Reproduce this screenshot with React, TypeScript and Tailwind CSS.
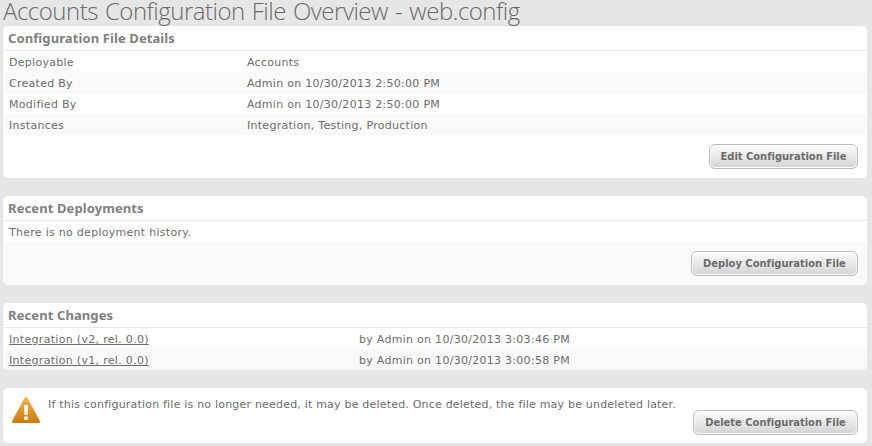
import type { ReactNode } from "react";

const details = [
  ["Deployable", "Accounts"],
  ["Created By", "Admin on 10/30/2013 2:50:00 PM"],
  ["Modified By", "Admin on 10/30/2013 2:50:00 PM"],
  ["Instances", "Integration, Testing, Production"],
];

const changes = [
  ["Integration (v2, rel. 0.0)", "by Admin on 10/30/2013 3:03:46 PM"],
  ["Integration (v1, rel. 0.0)", "by Admin on 10/30/2013 3:00:58 PM"],
];

function Card({ className, children }: { className: string; children: ReactNode }) {
  return <section className={`overflow-hidden rounded-[5px] bg-white ${className}`}>{children}</section>;
}

function CardTitle({ children }: { children: ReactNode }) {
  return (
    <h2 className="h-[25px] border-b border-[#e6e6e6] pl-[5px] text-[13px] leading-[25px] font-bold tracking-[0.1px] text-[#808080] font-['Noto_Sans',sans-serif]">
      <span>{children}</span>
    </h2>
  );
}

function Button({ className, children }: { className: string; children: ReactNode }) {
  return (
    <button
      className={`h-[25px] shrink-0 rounded-[6px] border border-[#bcbcbc] bg-linear-to-b from-[#fdfdfd] to-[#d2d3d5] text-center text-[10px] leading-[23px] font-bold tracking-[-0.04px] whitespace-nowrap text-[#6c6c6c] shadow-[inset_0_-1px_0_0_#fff,inset_0_0_0_1px_rgba(255,255,255,0.5)] ${className}`}
    >
      <span>{children}</span>
    </button>
  );
}

function WarningIcon() {
  return (
    <svg width="28" height="26" viewBox="0 0 28 26" className="shrink-0">
      <defs>
        <linearGradient id="amber" x1="0" y1="0" x2="0" y2="1">
          <stop offset="0" stopColor="#f8b04a" />
          <stop offset="1" stopColor="#cc7b0c" />
        </linearGradient>
      </defs>
      <path
        d="M12.5 0.9Q14-.8 15.5.9L27.7 23.6Q28.6 26 26.5 26H1.5Q-.6 26 .3 23.6Z"
        fill="url(#amber)"
      />
      <path d="M12 8h4l-.4 10h-3.2ZM12.2 19.6h3.6v3.2h-3.6Z" fill="white" />
    </svg>
  );
}

export default function App() {
  return (
    <main className="h-[446px] w-[872px] overflow-hidden bg-[#e6e6e6] pr-[5px] pl-[3px] text-[11px] tracking-[0.28px] text-[#6c6c6c] font-['DejaVu_Sans',sans-serif]">
      <h1 className="h-[26px] text-[24px] leading-[22px] font-light tracking-[-0.5px] [word-spacing:1.4px] whitespace-nowrap text-[#6a6a6a] font-['Open_Sans',sans-serif]">
        Accounts Configuration File Overview - web.config
      </h1>
      <Card className="h-[152px]">
        <CardTitle>Configuration File Details</CardTitle>
        {details.map(([label, value]) => (
          <div key={label} className="flex h-[21px] pl-[6px] leading-[23px] even:bg-white odd:bg-[#f9f9f9]">
            <span className="w-[238px]">{label}</span>
            <span>{value}</span>
          </div>
        ))}
        <div className="flex justify-end pt-[9px] pr-[9px]">
          <Button className="w-[149px]">Edit Configuration File</Button>
        </div>
      </Card>
      <Card className="mt-[18px] h-[89px]">
        <CardTitle>Recent Deployments</CardTitle>
        <p className="h-[21px] pl-[6px] leading-[23px]">There is no deployment history.</p>
        <div className="flex h-[43px] justify-end bg-[#f9f9f9] pt-[9px] pr-[9px]">
          <Button className="w-[167px]">Deploy Configuration File</Button>
        </div>
      </Card>
      <Card className="mt-[18px] h-[67px]">
        <CardTitle>Recent Changes</CardTitle>
        {changes.map(([label, value]) => (
          <div key={label} className="flex h-[21px] pl-[6px] leading-[23px] even:bg-white odd:bg-[#f9f9f9]">
            <span className="w-[350px]">
              <a className="tracking-[0.31px] underline">{label}</a>
            </span>
            <span>{value}</span>
          </div>
        ))}
      </Card>
      <Card className="mt-[18px] flex h-[55px] pr-[9px] pl-[9px]">
        <div className="pt-[9px]">
          <WarningIcon />
        </div>
        <p className="grow pt-[10px] pl-[8px] leading-[14px] tracking-[0.2px] whitespace-nowrap">
          If this configuration file is no longer needed, it may be deleted. Once deleted, the file may be undeleted later.
        </p>
        <div className="pt-[22px]">
          <Button className="w-[165px]">Delete Configuration File</Button>
        </div>
      </Card>
    </main>
  );
}
